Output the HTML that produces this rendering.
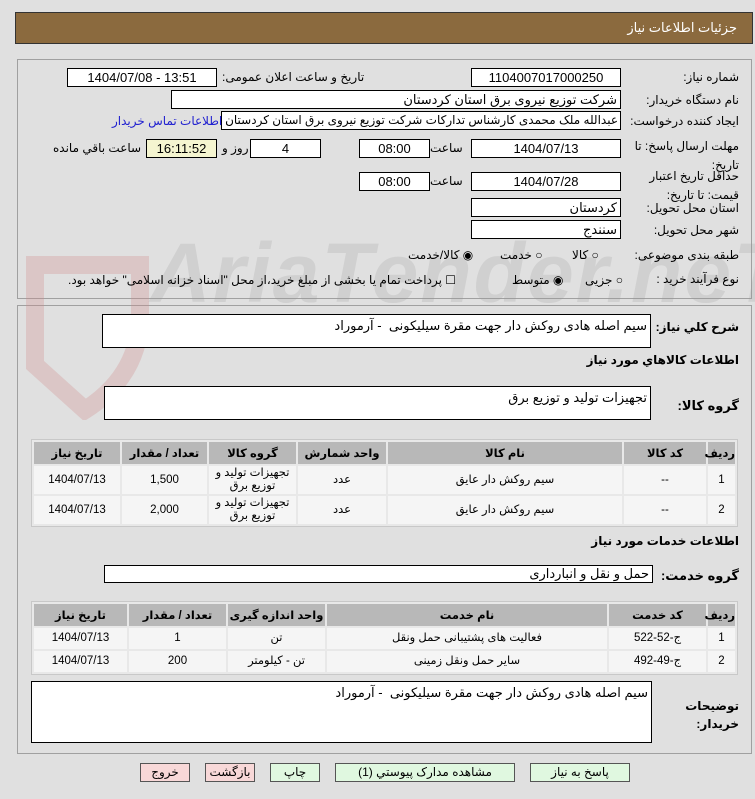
<!DOCTYPE html>
<html><head><meta charset="utf-8"><style>
body{margin:0;width:755px;height:799px;background:#e0e0e0;font-family:"Liberation Sans","DejaVu Sans",sans-serif;font-size:12px;color:#000;position:relative;overflow:hidden}
.a{position:absolute;white-space:nowrap}
.r{text-align:right;direction:rtl}
.box{position:absolute;background:#fff;border:1px solid #000;box-sizing:border-box;height:19px;line-height:17px;text-align:center;font-size:13px;overflow:hidden;white-space:nowrap}
.bl{text-align:right;direction:rtl;padding-right:3px}
.pan{position:absolute;border:1px solid #a0a0a0;box-sizing:border-box}
table{position:absolute;border-collapse:separate;border-spacing:2px;background:#e8e8e8;border:1px solid #c8c8c8;font-size:11.5px;direction:rtl;table-layout:fixed}
th{background:#b8b8b8;font-weight:bold;height:22px;padding:0}
td{background:#f5f5f5;text-align:center;padding:0;line-height:13px}
.btn{position:absolute;top:763px;height:19px;border:1px solid #555;box-sizing:border-box;text-align:center;line-height:17px;font-size:12px}
.wm{position:absolute;font-weight:bold;font-style:italic;color:rgba(150,150,150,.22);font-size:84px;left:150px;top:225px;letter-spacing:2px}
</style></head><body>
<div class="a" style="left:15px;top:12px;width:738px;height:32px;background:#8b6a3e;border:1px solid #333;box-sizing:border-box"></div>
<div class="a r" style="right:18px;top:20px;color:#fff;font-size:13px">جزئیات اطلاعات نیاز</div>

<div class="pan" style="left:17px;top:59px;width:735px;height:240px"></div>
<div class="pan" style="left:17px;top:305px;width:735px;height:449px"></div>
<div class="wm">AriaTender.neT</div>
<svg class="a" style="left:20px;top:255px" width="130" height="165"><path d="M15 10 L120 10 L120 60 Q120 120 65 155 L15 110 Z" fill="none" stroke="rgba(210,140,140,.3)" stroke-width="18"/></svg>

<div class="a r" style="right:16px;top:70px">شماره نیاز:</div>
<div class="box" style="left:471px;top:68px;width:150px">1104007017000250</div>
<div class="a r" style="left:222px;top:70px">تاریخ و ساعت اعلان عمومی:</div>
<div class="box" style="left:67px;top:68px;width:150px">1404/07/08 - 13:51</div>

<div class="a r" style="right:16px;top:93px">نام دستگاه خریدار:</div>
<div class="box bl" style="left:171px;top:90px;width:450px">شرکت توزیع نیروی برق استان کردستان</div>

<div class="a r" style="right:16px;top:114px">ایجاد کننده درخواست:</div>
<div class="box bl" style="left:221px;top:111px;width:400px;font-size:12px;padding-right:2px">عبدالله ملک محمدی کارشناس تدارکات شرکت توزیع نیروی برق استان کردستان</div>
<div class="a r" style="left:112px;top:114px;color:#2020d0">اطلاعات تماس خریدار</div>

<div class="a r" style="right:16px;top:137px;line-height:19px;text-align:right;white-space:normal;width:110px">مهلت ارسال پاسخ: تا<br>تاریخ:</div>
<div class="box" style="left:471px;top:139px;width:150px">1404/07/13</div>
<div class="a r" style="left:430px;top:141px">ساعت</div>
<div class="box" style="left:359px;top:139px;width:71px">08:00</div>
<div class="box" style="left:250px;top:139px;width:71px">4</div>
<div class="a r" style="left:222px;top:141px">روز و</div>
<div class="box" style="left:146px;top:139px;width:71px;background:#f5f5d0">16:11:52</div>
<div class="a r" style="left:53px;top:141px">ساعت باقي مانده</div>

<div class="a r" style="right:16px;top:167px;line-height:19px;text-align:right;white-space:normal;width:110px">حداقل تاریخ اعتبار<br>قیمت: تا تاریخ:</div>
<div class="box" style="left:471px;top:172px;width:150px">1404/07/28</div>
<div class="a r" style="left:430px;top:174px">ساعت</div>
<div class="box" style="left:359px;top:172px;width:71px">08:00</div>

<div class="a r" style="right:16px;top:201px">استان محل تحویل:</div>
<div class="box bl" style="left:471px;top:198px;width:150px">کردستان</div>
<div class="a r" style="right:16px;top:223px">شهر محل تحویل:</div>
<div class="box bl" style="left:471px;top:220px;width:150px">سنندج</div>

<div class="a r" style="right:16px;top:248px">طبقه بندی موضوعی:</div>
<div class="a r" style="left:572px;top:248px">○ کالا</div>
<div class="a r" style="left:500px;top:248px">○ خدمت</div>
<div class="a r" style="left:408px;top:248px">◉ کالا/خدمت</div>
<div class="a r" style="right:16px;top:272px">نوع فرآیند خرید :</div>
<div class="a r" style="left:585px;top:273px">○ جزیی</div>
<div class="a r" style="left:512px;top:273px">◉ متوسط</div>
<div class="a r" style="left:68px;top:273px">☐ پرداخت تمام یا بخشی از مبلغ خرید،از محل "اسناد خزانه اسلامی" خواهد بود.</div>

<div class="a r" style="right:16px;top:320px;font-weight:bold">شرح كلي نياز:</div>
<div class="box bl" style="left:102px;top:314px;width:549px;height:34px;line-height:22px">سیم اصله هادی روکش دار جهت مقرة سیلیکونی &nbsp;- آرموراد</div>
<div class="a r" style="right:16px;top:353px;font-weight:bold">اطلاعات کالاهاي مورد نياز</div>
<div class="a r" style="right:16px;top:398px;font-weight:bold;font-size:13px">گروه کالا:</div>
<div class="box bl" style="left:104px;top:386px;width:547px;height:34px;line-height:22px">تجهیزات تولید و توزیع برق</div>

<table style="left:31px;top:439px;width:707px">
<colgroup><col style="width:27px"><col style="width:82px"><col style="width:234px"><col style="width:88px"><col style="width:87px"><col style="width:85px"><col></colgroup>
<tr><th>ردیف</th><th>کد کالا</th><th>نام کالا</th><th>واحد شمارش</th><th>گروه کالا</th><th>تعداد / مقدار</th><th>تاریخ نیاز</th></tr>
<tr style="height:28px"><td>1</td><td>--</td><td>سیم روکش دار عایق</td><td>عدد</td><td>تجهیزات تولید و توزیع برق</td><td>1,500</td><td>1404/07/13</td></tr>
<tr style="height:28px"><td>2</td><td>--</td><td>سیم روکش دار عایق</td><td>عدد</td><td>تجهیزات تولید و توزیع برق</td><td>2,000</td><td>1404/07/13</td></tr>
</table>

<div class="a r" style="right:16px;top:534px;font-weight:bold">اطلاعات خدمات مورد نیاز</div>
<div class="a r" style="right:16px;top:568px;font-weight:bold;font-size:13px">گروه خدمت:</div>
<div class="box bl" style="left:104px;top:565px;width:549px;height:18px;line-height:16px">حمل و نقل و انبارداری</div>

<table style="left:31px;top:601px;width:707px">
<colgroup><col style="width:27px"><col style="width:97px"><col style="width:280px"><col style="width:97px"><col style="width:97px"><col></colgroup>
<tr><th>ردیف</th><th>کد خدمت</th><th>نام خدمت</th><th>واحد اندازه گیری</th><th>تعداد / مقدار</th><th>تاریخ نیاز</th></tr>
<tr style="height:21px"><td>1</td><td>ج-52-522</td><td>فعالیت های پشتیبانی حمل ونقل</td><td>تن</td><td>1</td><td>1404/07/13</td></tr>
<tr style="height:21px"><td>2</td><td>ج-49-492</td><td>سایر حمل ونقل زمینی</td><td>تن - کیلومتر</td><td>200</td><td>1404/07/13</td></tr>
</table>

<div class="a r" style="right:16px;top:697px;font-weight:bold;line-height:18px;text-align:right">توضیحات<br>خریدار:</div>
<div class="box bl" style="left:31px;top:681px;width:621px;height:62px;line-height:22px">سیم اصله هادی روکش دار جهت مقرة سیلیکونی &nbsp;- آرموراد</div>

<div class="btn" style="left:530px;width:100px;background:#e0f8e0">پاسخ به نیاز</div>
<div class="btn" style="left:335px;width:180px;background:#e0f8e0">مشاهده مدارک پیوستي (1)</div>
<div class="btn" style="left:270px;width:50px;background:#e0f8e0">چاپ</div>
<div class="btn" style="left:205px;width:50px;background:#f8d8d8">بازگشت</div>
<div class="btn" style="left:140px;width:50px;background:#f8d8d8">خروج</div>
</body></html>
